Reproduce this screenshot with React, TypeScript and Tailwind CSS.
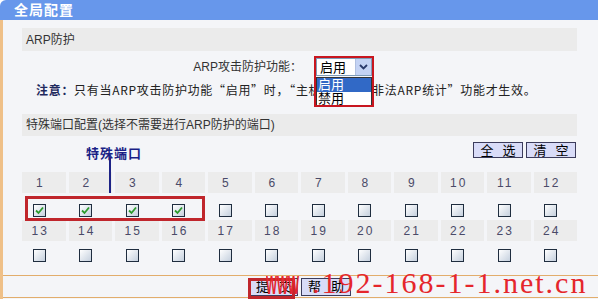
import React from "react";

const ports = Array.from({ length: 24 }, (_, i) => i + 1);
const checkedPorts = [1, 2, 3, 4];

function Box({ checked }: { checked?: boolean }) {
  return (
    <div className="w-[13px] h-[13px] border border-[#1f2d3f] bg-linear-to-br from-white to-[#c5d0de] flex items-center justify-center">
      {checked && (
        <svg width="9" height="9" viewBox="0 0 9 9">
          <path d="M1 4.5 L3.5 7 L8 1.5" stroke="#2c9a2c" strokeWidth="1.8" fill="none" />
        </svg>
      )}
    </div>
  );
}

function PortRow({ list }: { list: number[] }) {
  return (
    <div className="grid grid-cols-12 gap-x-[3px] h-[21px]">
      {list.map((p) => (
        <div
          key={p}
          className="bg-[#ececec] flex items-center justify-center pr-[7px] text-[12px] tracking-[2px] text-[#4a4a68]"
        >
          {p}
        </div>
      ))}
    </div>
  );
}

function BoxRow({ list, top, h }: { list: number[]; top: string; h: string }) {
  return (
    <div className={`grid grid-cols-12 gap-x-[3px] ${h}`}>
      {list.map((p) => (
        <div key={p} className={`flex justify-center pr-[9px] ${top}`}>
          <Box checked={checkedPorts.includes(p)} />
        </div>
      ))}
    </div>
  );
}

function Btn({ a, b, w, h, gap }: { a: string; b: string; w: string; h: string; gap: string }) {
  return (
    <button
      className={`${w} ${h} bg-[#d9dcf8] border border-[#3c3c5c] text-[13px] text-black leading-none flex items-center justify-center ${gap} whitespace-nowrap`}
    >
      <span>{a}</span>
      <span>{b}</span>
    </button>
  );
}

export default function App() {
  const row1 = ports.slice(0, 12);
  const row2 = ports.slice(12);

  return (
    <div
      className="relative w-[598px] h-[301px] overflow-hidden bg-white text-[12px] text-[#333]"
      style={{ fontFamily: '"Liberation Sans", "Noto Sans CJK SC", sans-serif' }}
    >
      {/* Header */}
      <div className="h-[20px] bg-[#6797eb] rounded-tl-[6px] flex items-center pl-[14px]">
        <span className="text-white font-bold text-[14px] leading-none tracking-[1px]">全局配置</span>
      </div>

      {/* Body */}
      <div className="border-l-[3px] border-[#efc088] bg-[#f4f5f8] flex flex-col h-[279px]">
        <div className="pl-[19px] pr-[21px] flex flex-col">
          <div className="mt-[8px] h-[23px] bg-[#ebebeb] flex items-center pl-[4px]">ARP防护</div>

          {/* select row */}
          <div className="mt-[6px] h-[20px] flex items-center">
            <div className="w-[280px] text-right">ARP攻击防护功能：</div>
            <div className="ml-[14px] relative">
              <div className="w-[56px] h-[18px] bg-white border border-[#7f9db9] flex items-center">
                <span className="pl-[3px] flex-1 text-[13px] text-black leading-none">启用</span>
                <div className="w-[16px] h-[16px] bg-[#c4d3f4] border-l border-[#b0c0e0] flex items-center justify-center">
                  <svg width="9" height="6" viewBox="0 0 9 6">
                    <path d="M1 1 L4.5 4.5 L8 1" stroke="#2a3a6a" strokeWidth="1.8" fill="none" />
                  </svg>
                </div>
              </div>
              {/* opened list */}
              <div className="absolute left-0 top-[19px] w-[56px] bg-white border border-[#333] z-10">
                <div className="h-[14px] bg-[#3169c6] text-white text-[13px] leading-[14px] pl-[1px]">启用</div>
                <div className="h-[14px] text-black text-[13px] leading-[14px] pl-[1px]">禁用</div>
              </div>
              <div className="absolute -left-[2px] -top-[2px] w-[60px] h-[51px] border-2 border-[#c8161f] z-20"></div>
            </div>
          </div>

          {/* note */}
          <div
            className="mt-[5px] h-[16px] flex items-center pl-[14px] text-[#222] whitespace-nowrap tracking-[0.7px]"
            style={{ fontFamily: '"Noto Sans CJK SC", "Liberation Sans", sans-serif' }}
          >
            <span className="font-bold text-[#1f2a5e]">注意：</span>
            <span>只有当ARP攻击防护功能“启用”时，“主机监控中“非法ARP统计”功能才生效。</span>
          </div>

          <div className="mt-[16px] h-[22px] bg-[#ebebeb] flex items-center pl-[4px]">
            特殊端口配置(选择不需要进行ARP防护的端口)
          </div>

          {/* buttons */}
          <div className="mt-[6px] h-[16px] flex justify-end gap-[3px] pr-[1px]">
            <Btn a="全" b="选" w="w-[50px]" h="h-[16px]" gap="gap-[9px]" />
            <Btn a="清" b="空" w="w-[50px]" h="h-[16px]" gap="gap-[9px]" />
          </div>

          {/* ports */}
          <div className="mt-[14px] relative">
            <PortRow list={row1} />
            <BoxRow list={row1} top="pt-[11px]" h="h-[27px]" />
            <PortRow list={row2} />
            <BoxRow list={row2} top="pt-[8px]" h="h-[34px]" />
            <div className="absolute left-[3px] top-[24px] w-[180px] h-[25px] border-[3px] border-[#c0262c]"></div>
            <div className="absolute left-[64px] -top-[25px] text-[13px] font-bold text-[#1a1f86] tracking-[1px] leading-none">
              特殊端口
            </div>
            <div className="absolute left-[87px] -top-[15px] w-[2px] h-[36px] bg-[#1d2386]"></div>
          </div>
        </div>

        {/* Footer */}
        <div className="border-t border-b border-[#e2ad6c] h-[23px] flex items-center pl-[247px] gap-[3px]">
          <Btn a="提" b="交" w="w-[48px]" h="h-[18px]" gap="gap-[10px]" />
          <Btn a="帮" b="助" w="w-[50px]" h="h-[18px]" gap="gap-[10px]" />
        </div>
      </div>

      {/* highlight round submit */}
      <div className="absolute left-[248px] top-[278px] w-[47px] h-[21px] border-[3px] border-[#c0262c]"></div>

      {/* watermark */}
      <div className="absolute left-[266px] top-[268px] whitespace-nowrap text-[#e5262c] flex items-end pointer-events-none leading-none">
        <span className="text-[26px] font-bold inline-block origin-left scale-x-[0.45] w-[36px]">WWW</span>
        <span
          className="text-[30px] tracking-[2px] ml-[10px]"
          style={{ fontFamily: '"Liberation Serif", serif' }}
        >
          .192-168-1-1.net.cn
        </span>
      </div>
    </div>
  );
}
